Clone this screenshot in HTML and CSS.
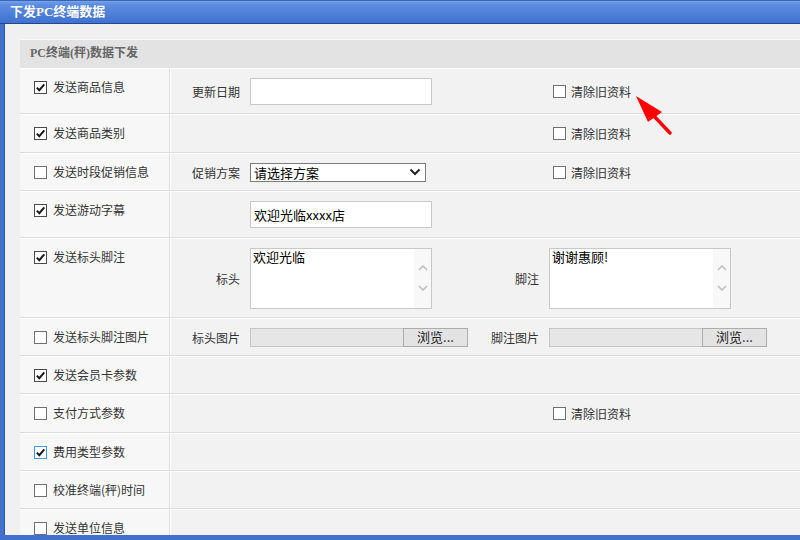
FILE: index.html
```html
<!DOCTYPE html>
<html lang="zh-CN">
<head>
<meta charset="utf-8">
<title>下发PC终端数据</title>
<link rel="stylesheet" href="styles.css">
</head>
<body>
<div class="window">
  <div class="titlebar">下发PC终端数据</div>
  <div class="frame">
    <div class="panel">
      <div class="panel-head">PC终端(秤)数据下发</div>

      <div class="row h46">
        <div class="lc"><span class="cb on"><svg viewBox="0 0 11 11"><path d="M1.8 5.6 L4.3 8.2 L9.3 2.3"/></svg></span><span>发送商品信息</span></div>
        <div class="rc">
          <span class="lb">更新日期</span>
          <div class="input"></div>
          <span></span>
          <div class="clear"><span class="cb"></span><span>清除旧资料</span></div>
        </div>
      </div>

      <div class="row h39">
        <div class="lc"><span class="cb on"><svg viewBox="0 0 11 11"><path d="M1.8 5.6 L4.3 8.2 L9.3 2.3"/></svg></span><span>发送商品类别</span></div>
        <div class="rc">
          <span></span><span></span><span></span>
          <div class="clear"><span class="cb"></span><span>清除旧资料</span></div>
        </div>
      </div>

      <div class="row h38">
        <div class="lc"><span class="cb"></span><span>发送时段促销信息</span></div>
        <div class="rc">
          <span class="lb">促销方案</span>
          <div class="select"><span>请选择方案</span><svg viewBox="0 0 12 8"><path d="M1.5 1.5 L6 6 L10.5 1.5"/></svg></div>
          <span></span>
          <div class="clear"><span class="cb"></span><span>清除旧资料</span></div>
        </div>
      </div>

      <div class="row h47">
        <div class="lc"><span class="cb on"><svg viewBox="0 0 11 11"><path d="M1.8 5.6 L4.3 8.2 L9.3 2.3"/></svg></span><span>发送游动字幕</span></div>
        <div class="rc">
          <span></span>
          <div class="input">欢迎光临xxxx店</div>
        </div>
      </div>

      <div class="row h80">
        <div class="lc"><span class="cb on"><svg viewBox="0 0 11 11"><path d="M1.8 5.6 L4.3 8.2 L9.3 2.3"/></svg></span><span>发送标头脚注</span></div>
        <div class="rc">
          <span class="lb">标头</span>
          <div class="textarea"><div class="ta-text">欢迎光临</div><div class="ta-scroll"><svg viewBox="0 0 10 6"><path d="M1 5 L5 1 L9 5"/></svg><svg viewBox="0 0 10 6"><path d="M1 1 L5 5 L9 1"/></svg></div></div>
          <span class="lb">脚注</span>
          <div class="textarea"><div class="ta-text">谢谢惠顾!</div><div class="ta-scroll"><svg viewBox="0 0 10 6"><path d="M1 5 L5 1 L9 5"/></svg><svg viewBox="0 0 10 6"><path d="M1 1 L5 5 L9 1"/></svg></div></div>
        </div>
      </div>

      <div class="row h38">
        <div class="lc"><span class="cb"></span><span>发送标头脚注图片</span></div>
        <div class="rc">
          <span class="lb">标头图片</span>
          <div class="file"><span class="file-box"></span><span class="file-btn">浏览...</span></div>
          <span class="lb">脚注图片</span>
          <div class="file"><span class="file-box"></span><span class="file-btn">浏览...</span></div>
        </div>
      </div>

      <div class="row h38">
        <div class="lc"><span class="cb on"><svg viewBox="0 0 11 11"><path d="M1.8 5.6 L4.3 8.2 L9.3 2.3"/></svg></span><span>发送会员卡参数</span></div>
        <div class="rc"></div>
      </div>

      <div class="row h39">
        <div class="lc"><span class="cb"></span><span>支付方式参数</span></div>
        <div class="rc">
          <span></span><span></span><span></span>
          <div class="clear"><span class="cb"></span><span>清除旧资料</span></div>
        </div>
      </div>

      <div class="row h38">
        <div class="lc"><span class="cb on focus"><svg viewBox="0 0 11 11"><path d="M1.8 5.6 L4.3 8.2 L9.3 2.3"/></svg></span><span>费用类型参数</span></div>
        <div class="rc"></div>
      </div>

      <div class="row h38">
        <div class="lc"><span class="cb"></span><span>校准终端(秤)时间</span></div>
        <div class="rc"></div>
      </div>

      <div class="row h40">
        <div class="lc"><span class="cb"></span><span>发送单位信息</span></div>
        <div class="rc"></div>
      </div>
    </div>
  </div>
</div>
<svg class="arrow" width="44" height="44" viewBox="0 0 44 44">
  <polygon points="5,5 31,21 17,31" fill="#f00"/>
  <line x1="22" y1="24" x2="39" y2="42" stroke="#f00" stroke-width="3.4" stroke-linecap="round"/>
</svg>
</body>
</html>
```

FILE: styles.css
```css
* { box-sizing: border-box; }
html, body {
  margin: 0;
  padding: 0;
  width: 800px;
  height: 540px;
  overflow: hidden;
  background: #f0f0f0;
  font-family: "Noto Sans CJK SC", "Liberation Sans", sans-serif;
  font-size: 12px;
  color: #333;
}
.window {
  width: 800px;
  height: 540px;
  display: flex;
  flex-direction: column;
  position: relative;
}
.titlebar {
  height: 24px;
  flex: none;
  background: linear-gradient(#76a2ea 0%, #5d8ee0 15%, #4d7fd8 60%, #3f71cf 100%);
  border-top: 1px solid #3b66b8;
  border-bottom: 1px solid #23468c;
  color: #fff;
  font-family: "Liberation Serif", "Noto Sans CJK SC", serif;
  font-weight: bold;
  font-size: 13px;
  line-height: 21px;
  padding-left: 10px;
  text-shadow: 0 0 1px rgba(0,0,0,0.15);
}
.frame {
  flex: 1;
  min-height: 0;
  background: #f0f0f0;
  border-left: 4px solid #4171cc;
  border-bottom: 5px solid #4171cc;
  padding: 15px 0 0 16px;
  overflow: hidden;
  box-shadow: inset 1px 0 0 #2d56a6;
}
.panel {
  width: 820px;
  background: #f2f2f2;
}
.panel-head {
  height: 29px;
  background: #e3e3e3;
  border-top: 1px solid #fbfbfb;
  padding-left: 10px;
  font-family: "Liberation Serif", "Noto Sans CJK SC", serif;
  font-weight: bold;
  font-size: 12px;
  color: #666;
  line-height: 27px;
}
.row {
  display: flex;
  border-top: 1px solid #ffffff;
  border-bottom: 1px solid #dcdcdc;
}
.h38 { height: 38px; }
.h39 { height: 39px; }
.h40 { height: 40px; }
.h46 { height: 46px; }
.h47 { height: 47px; }
.h80 { height: 80px; }

.lc {
  width: 150px;
  flex: none;
  background: #f7f7f7;
  border-right: 1px solid #dedede;
  padding: 9px 0 0 14px;
  display: flex;
  align-items: flex-start;
  gap: 6px;
  line-height: 18px;
  color: #333;
}
.lc .cb { margin-top: 3px; }
.rc {
  flex: 1;
  border-left: 1px solid #ffffff;
  display: grid;
  grid-template-columns: 79px 182px 117px 1fr;
  align-items: center;
}
.lb {
  text-align: right;
  padding-right: 10px;
  color: #333;
  white-space: nowrap;
}
.cb {
  width: 13px;
  height: 13px;
  flex: none;
  display: inline-flex;
  align-items: center;
  justify-content: center;
  background: #fff;
  border: 1px solid #707070;
}
.cb.on { border-color: #4a4a4a; }
.cb.focus { border-color: #3c9be8; }
.cb svg { width: 11px; height: 11px; display: block; }
.cb svg path { fill: none; stroke: #1a1a1a; stroke-width: 2; }
.clear {
  display: flex;
  align-items: center;
  gap: 5px;
  padding-left: 4px;
  color: #333;
}
.input {
  width: 182px;
  height: 27px;
  background: #fff;
  border: 1px solid #c8c8c8;
  font-size: 13px;
  color: #000;
  line-height: 25px;
  padding-left: 3px;
}
.select {
  width: 176px;
  height: 19px;
  background: #fff;
  border: 1px solid #7a7a7a;
  display: flex;
  align-items: center;
  justify-content: space-between;
  padding: 0 4px 0 3px;
  font-size: 13px;
  color: #000;
  line-height: 17px;
}
.select svg { width: 12px; height: 8px; }
.select svg path { fill: none; stroke: #222; stroke-width: 2; }
.textarea {
  width: 182px;
  height: 61px;
  background: #fff;
  border: 1px solid #c8c8c8;
  display: flex;
}
.ta-text {
  flex: 1;
  padding: 0 2px;
  font-size: 13px;
  line-height: 16px;
  color: #000;
  font-weight: 400;
}
.ta-scroll {
  width: 17px;
  background: #f8f8f8;
  display: flex;
  flex-direction: column;
  align-items: center;
  justify-content: center;
  gap: 14px;
}
.ta-scroll svg { width: 10px; height: 6px; }
.ta-scroll svg path { fill: none; stroke: #bdbdbd; stroke-width: 1.5; }
.file {
  display: flex;
  width: 218px;
  height: 19px;
}
.file-box {
  width: 153px;
  background: #e6e6e6;
  border: 1px solid #c6c6c6;
  border-right: none;
}
.file-btn {
  width: 65px;
  background: #e3e3e3;
  border: 1px solid #acacac;
  text-align: center;
  font-size: 13px;
  line-height: 16px;
  color: #222;
}
.arrow {
  position: absolute;
  left: 631px;
  top: 91px;
}
```
